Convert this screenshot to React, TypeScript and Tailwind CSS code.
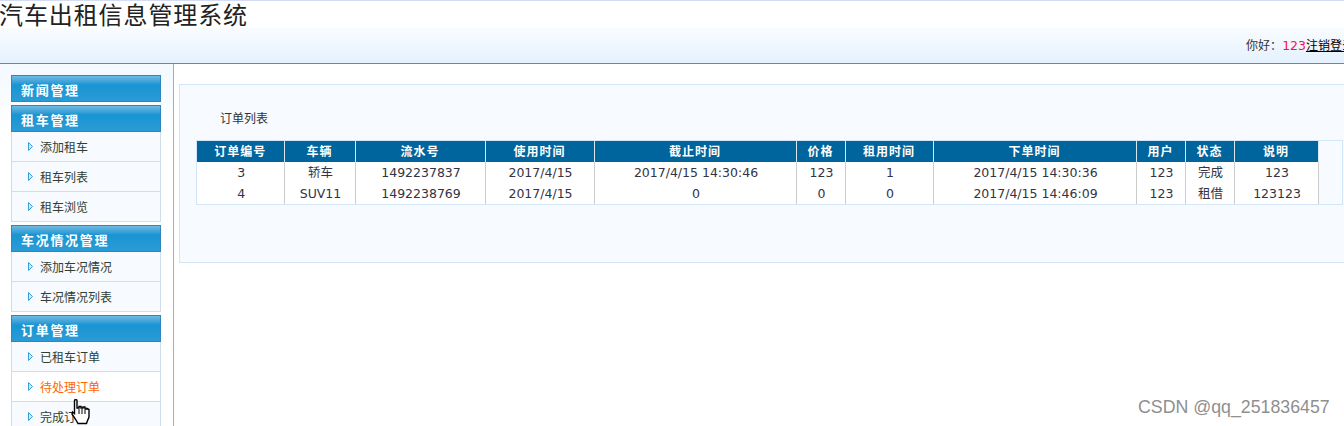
import React from 'react';

const font = "font-['Liberation_Sans','Noto_Sans_CJK_SC',sans-serif]";

const columns = [
  { label: '订单编号', width: 'w-[87px]' },
  { label: '车辆', width: 'w-[71px]' },
  { label: '流水号', width: 'w-[130px]' },
  { label: '使用时间', width: 'w-[109px]' },
  { label: '截止时间', width: 'w-[202px]' },
  { label: '价格', width: 'w-[49px]' },
  { label: '租用时间', width: 'w-[88px]' },
  { label: '下单时间', width: 'w-[203px]' },
  { label: '用户', width: 'w-[49px]' },
  { label: '状态', width: 'w-[49px]' },
  { label: '说明', width: 'w-[84px]' },
];

const orders = [
  ['3', '轿车', '1492237837', '2017/4/15', '2017/4/15 14:30:46', '123', '1', '2017/4/15 14:30:36', '123', '完成', '123'],
  ['4', 'SUV11', '1492238769', '2017/4/15', '0', '0', '0', '2017/4/15 14:46:09', '123', '租借', '123123'],
];

const menu = [
  { title: '新闻管理', items: [] as string[] },
  { title: '租车管理', items: ['添加租车', '租车列表', '租车浏览'] },
  { title: '车况情况管理', items: ['添加车况情况', '车况情况列表'] },
  { title: '订单管理', items: ['已租车订单', '待处理订单', '完成订单'] },
];

function Arrow() {
  return (
    <svg width="5" height="9" viewBox="0 0 5 9" className="mb-[2px] shrink-0">
      <path d="M0.5 0.5 L4.5 4.5 L0.5 8.5 Z" fill="#cfeaf8" stroke="#3a9fd8" strokeWidth="1" />
    </svg>
  );
}

function MenuGroup({ title, items }: { title: string; items: string[] }) {
  return (
    <div className="mb-[3px] w-[150px]">
      <div className="h-[27px] border border-[#2f86bf] bg-gradient-to-b from-[#6cbbe3] via-[#1795d2] via-35% to-[#2b9bd6] pl-[9px] pt-[5px] text-[13px] leading-[20px] font-bold tracking-[1.7px] text-white">
        {title}
      </div>
      {items.length > 0 && (
        <ul className="border-x border-b border-[#cfdfea] bg-[#f7faff]">
          {items.map((item, i) => (
            <li
              key={item}
              className={`flex h-[30px] items-center gap-[7px] pt-[2px] pl-[16px] text-[12px] last:h-[29px] ${
                i < items.length - 1 ? 'border-b border-[#cfdfea]' : ''
              } ${item === '待处理订单' ? 'bg-white text-[#ff6600]' : 'text-[#2f3f33]'}`}
            >
              <Arrow />
              {item}
            </li>
          ))}
        </ul>
      )}
    </div>
  );
}

export default function App() {
  return (
    <div className={`relative h-[426px] w-[1344px] overflow-hidden bg-white ${font}`}>
      {/* header */}
      <header className="h-[64px] border-t border-t-[#d3dcf5] border-b border-b-[#4a90c2]">
        <h1 className="-ml-[1px] h-[27px] text-[24px] leading-[30px] font-normal tracking-[0.9px] whitespace-nowrap text-[#222]">
          汽车出租信息管理系统
        </h1>
        <div className="flex h-[35px] justify-end bg-gradient-to-b from-[#f9fcff] to-[#e4f1fd] pt-[9px] text-[12px] leading-[18px] whitespace-nowrap text-[#333]">
          <div className="-mr-[10px] font-['DejaVu_Sans','Noto_Sans_CJK_SC',sans-serif]">
            你好：<span className="text-[12.5px] text-[#ff0f4b]">123</span>
            <a className="text-black underline">注销登录</a>
          </div>
        </div>
      </header>

      <div className="flex">
        {/* sidebar */}
        <aside className="h-[362px] w-[174px] shrink-0 border-r border-[#8ab4d2] bg-gradient-to-b from-[#f3f9ff] to-white to-[70px] pt-[11px] pl-[11px]">
          {menu.map((group) => (
            <MenuGroup key={group.title} title={group.title} items={group.items} />
          ))}
        </aside>

        {/* main */}
        <main className="flex-1 pt-[20px] pl-[5px]">
          <section className="h-[179px] w-[1200px] border border-[#d2e6f8] bg-[#f7faff] pt-[24px] pl-[16px]">
            <p className="h-[31px] pl-[24px] text-[12px] leading-[20px] text-[#333]">订单列表</p>
            <div className="w-[1147px] border border-[#d2e6f8]">
              <table className="table-fixed border-collapse font-['DejaVu_Sans','Noto_Sans_CJK_SC',sans-serif]">
                <thead>
                  <tr className="h-[21px] bg-[#00659c]">
                    {columns.map((col) => (
                      <th
                        key={col.label}
                        className={`${col.width} border-r border-[#d9e6ee] p-0 text-center text-[12px] leading-[20px] font-bold tracking-[1px] text-white`}
                      >
                        {col.label}
                      </th>
                    ))}
                  </tr>
                </thead>
                <tbody className="bg-white">
                  {orders.map((row) => (
                    <tr key={row[2]} className="h-[21px]">
                      {row.map((cell, i) => (
                        <td
                          key={i}
                          className="border-r border-[#cccccc] p-0 pl-[2px] text-center text-[12.5px] leading-[20px] text-[#333344]"
                        >
                          {cell}
                        </td>
                      ))}
                    </tr>
                  ))}
                </tbody>
              </table>
            </div>
          </section>
        </main>
      </div>

      {/* mouse pointer */}
      <svg width="20" height="26" viewBox="0 0 20 26" className="absolute top-[399px] left-[71px]">
        <path
          d="M3.5 1.5 C3.5 0.5 6 0.5 6 1.5 L6 9 L8 9 L8 7.5 L10 7.5 L10 9 L12 9 L12 8 L14 8 L14 10 L16 10 L16 9.5 L18 10.5 L18 18 L16 23 L15.5 24.5 L7 24.5 L5 21 L1 15 L1.5 13 L3.5 14.5 Z"
          fill="white"
          stroke="black"
          strokeWidth="1.4"
        />
        <path d="M8 10 V15 M11 10 V15 M14 11 V15" stroke="black" strokeWidth="1" />
      </svg>

      {/* watermark */}
      <div className="absolute top-[397px] left-[1138px] text-[17.75px] leading-[20px] whitespace-nowrap text-[#8f8f8f]">
        CSDN @qq_251836457
      </div>
    </div>
  );
}
